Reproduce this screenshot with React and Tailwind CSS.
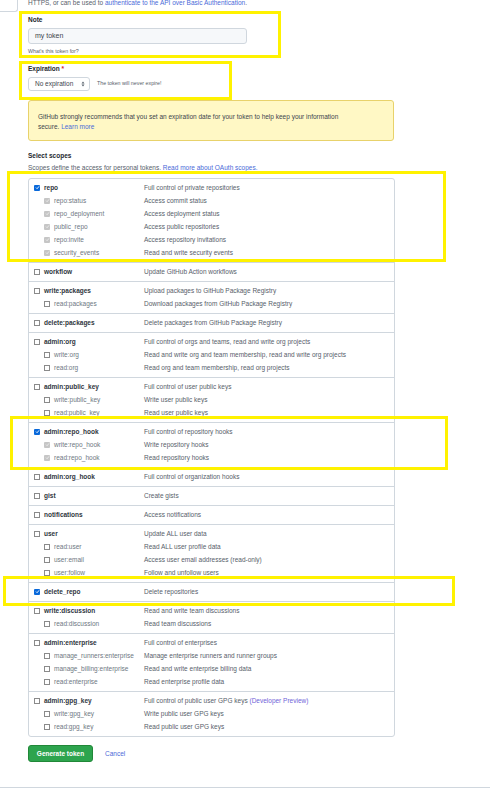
import React from "react";

const groups = [
  [
    ["repo", "Full control of private repositories", "on", 0],
    ["repo:status", "Access commit status", "dis", 1],
    ["repo_deployment", "Access deployment status", "dis", 1],
    ["public_repo", "Access public repositories", "dis", 1],
    ["repo:invite", "Access repository invitations", "dis", 1],
    ["security_events", "Read and write security events", "dis", 1],
  ],
  [["workflow", "Update GitHub Action workflows", "off", 0]],
  [
    ["write:packages", "Upload packages to GitHub Package Registry", "off", 0],
    ["read:packages", "Download packages from GitHub Package Registry", "off", 1],
  ],
  [["delete:packages", "Delete packages from GitHub Package Registry", "off", 0]],
  [
    ["admin:org", "Full control of orgs and teams, read and write org projects", "off", 0],
    ["write:org", "Read and write org and team membership, read and write org projects", "off", 1],
    ["read:org", "Read org and team membership, read org projects", "off", 1],
  ],
  [
    ["admin:public_key", "Full control of user public keys", "off", 0],
    ["write:public_key", "Write user public keys", "off", 1],
    ["read:public_key", "Read user public keys", "off", 1],
  ],
  [
    ["admin:repo_hook", "Full control of repository hooks", "on", 0],
    ["write:repo_hook", "Write repository hooks", "dis", 1],
    ["read:repo_hook", "Read repository hooks", "dis", 1],
  ],
  [["admin:org_hook", "Full control of organization hooks", "off", 0]],
  [["gist", "Create gists", "off", 0]],
  [["notifications", "Access notifications", "off", 0]],
  [
    ["user", "Update ALL user data", "off", 0],
    ["read:user", "Read ALL user profile data", "off", 1],
    ["user:email", "Access user email addresses (read-only)", "off", 1],
    ["user:follow", "Follow and unfollow users", "off", 1],
  ],
  [["delete_repo", "Delete repositories", "on", 0]],
  [
    ["write:discussion", "Read and write team discussions", "off", 0],
    ["read:discussion", "Read team discussions", "off", 1],
  ],
  [
    ["admin:enterprise", "Full control of enterprises", "off", 0],
    ["manage_runners:enterprise", "Manage enterprise runners and runner groups", "off", 1],
    ["manage_billing:enterprise", "Read and write enterprise billing data", "off", 1],
    ["read:enterprise", "Read enterprise profile data", "off", 1],
  ],
  [
    ["admin:gpg_key", "Full control of public user GPG keys", "off", 0, true],
    ["write:gpg_key", "Write public user GPG keys", "off", 1],
    ["read:gpg_key", "Read public user GPG keys", "off", 1],
  ],
];

function Box({ state }) {
  if (state === "on") {
    return (
      <span className="w-[6px] h-[6px] rounded-[1px] bg-[#0969da] flex items-center justify-center shrink-0">
        <svg width="5" height="5" viewBox="0 0 10 10">
          <path d="M2 5.2 L4.2 7.4 L8.2 2.6" stroke="white" strokeWidth="1.8" fill="none" />
        </svg>
      </span>
    );
  }
  if (state === "dis") {
    return (
      <span className="w-[6px] h-[6px] rounded-[1px] bg-[#c6c6c6] flex items-center justify-center shrink-0">
        <svg width="5" height="5" viewBox="0 0 10 10">
          <path d="M2 5.2 L4.2 7.4 L8.2 2.6" stroke="#f2f2f2" strokeWidth="1.6" fill="none" />
        </svg>
      </span>
    );
  }
  return <span className="w-[6px] h-[6px] border border-[#8a8a8a] bg-white shrink-0" />;
}

function Yellow({ cls }) {
  return <div className={"absolute border-[3px] border-[#fff200] pointer-events-none " + cls} />;
}

export default function App() {
  return (
    <div className="relative w-[490px] h-[812px] bg-white overflow-hidden text-[#24292f]" style={{ fontFamily: '"Liberation Sans", Arial, sans-serif' }}>
      <div className="flex h-[12px]">
        <div className="w-[18px] h-[12px] border-r border-b border-[#d0d7de] rounded-br-[3px]" />
        <div className="ml-[10px] -mt-[1px] text-[6.5px] leading-[8px] whitespace-nowrap text-[#57606a]">
          HTTPS, or can be used to <span className="text-[#4a6ad8]">authenticate to the API over Basic Authentication</span>.
        </div>
      </div>

      <div className="pl-[28px] w-[395px]">
        <div className="mt-[4px] text-[6.5px] leading-[8px] font-bold">Note</div>
        <div className="mt-[4px] w-[219px] h-[16px] rounded-[3px] border border-[#d0d7de] bg-[#f6f8fa] flex items-center pl-[6px] text-[7px] text-[#3d444d]">
          my token
        </div>
        <div className="mt-[4px] text-[5.3px] leading-[7px] text-[#57606a]">What's this token for?</div>

        <div className="mt-[10px] text-[6.5px] leading-[8px] font-bold">
          Expiration <span className="text-[#cf222e]">*</span>
        </div>
        <div className="mt-[4px] flex items-center">
          <div className="w-[62px] h-[14px] rounded-[3px] border border-[#d0d7de] bg-white flex items-center justify-between pl-[6px] pr-[4px] text-[6.5px] text-[#3d444d]">
            <span>No expiration</span>
            <svg width="4" height="6" viewBox="0 0 8 12">
              <path d="M4 1 L7 5 H1 Z M4 11 L1 7 H7 Z" fill="#57606a" />
            </svg>
          </div>
          <div className="ml-[7px] text-[5.3px] text-[#57606a]">The token will never expire!</div>
        </div>

        <div className="mt-[9px] w-[366px] rounded-[3px] border border-[#e8d26b] bg-[#fff8c5] pl-[9px] pt-[11px] pb-[8px] text-[6.5px] leading-[10px] text-[#3d444d]">
          <div className="whitespace-nowrap">GitHub strongly recommends that you set an expiration date for your token to help keep your information</div>
          <div className="whitespace-nowrap">
            secure. <span className="text-[#4a6ad8]">Learn more</span>
          </div>
        </div>

        <div className="mt-[11px] text-[6.5px] leading-[8px] font-bold">Select scopes</div>
        <div className="mt-[4px] text-[6.5px] leading-[8px] text-[#57606a] whitespace-nowrap">
          Scopes define the access for personal tokens. <span className="text-[#4a6ad8]">Read more about OAuth scopes.</span>
        </div>

        <div className="mt-[6px] w-[367px] border border-[#d0d7de] rounded-[3px]">
          {groups.map((g, gi) => (
            <div key={gi} className={"pt-[2px] pb-[3px] " + (gi > 0 ? "border-t border-[#d0d7de]" : "")}>
              {g.map(([name, desc, st, sub, preview]) => (
                <div key={name} className="h-[13px] flex items-center pl-[5px] text-[6.5px] whitespace-nowrap">
                  <div className={"w-[110px] flex items-center gap-[4px] " + (sub ? "pl-[10px]" : "")}>
                    <Box state={st} />
                    <span className={sub ? "text-[#6e7781]" : "font-bold text-[#2f363d]"}>{name}</span>
                  </div>
                  <div className="text-[#57606a]">
                    {desc}
                    {preview ? <span className="text-[#6f5fd8]"> (Developer Preview)</span> : null}
                  </div>
                </div>
              ))}
            </div>
          ))}
        </div>

        <div className="mt-[8px] flex items-center">
          <div className="w-[65px] h-[17px] rounded-[3px] bg-[#2da44e] border border-[#218838] flex items-center justify-center text-white font-bold text-[6.5px]">
            Generate token
          </div>
          <div className="ml-[12px] text-[6.5px] text-[#4a6ad8]">Cancel</div>
        </div>
      </div>

      <div className="mt-[25px] h-px w-full bg-[#d0d7de]" />

      <Yellow cls="left-[19px] top-[11px] w-[262px] h-[47px]" />
      <Yellow cls="left-[19px] top-[61px] w-[213px] h-[39px]" />
      <Yellow cls="left-[7px] top-[171px] w-[439px] h-[91px]" />
      <Yellow cls="left-[10px] top-[416px] w-[438px] h-[54px]" />
      <Yellow cls="left-[3px] top-[576px] w-[452px] h-[30px]" />
    </div>
  );
}
